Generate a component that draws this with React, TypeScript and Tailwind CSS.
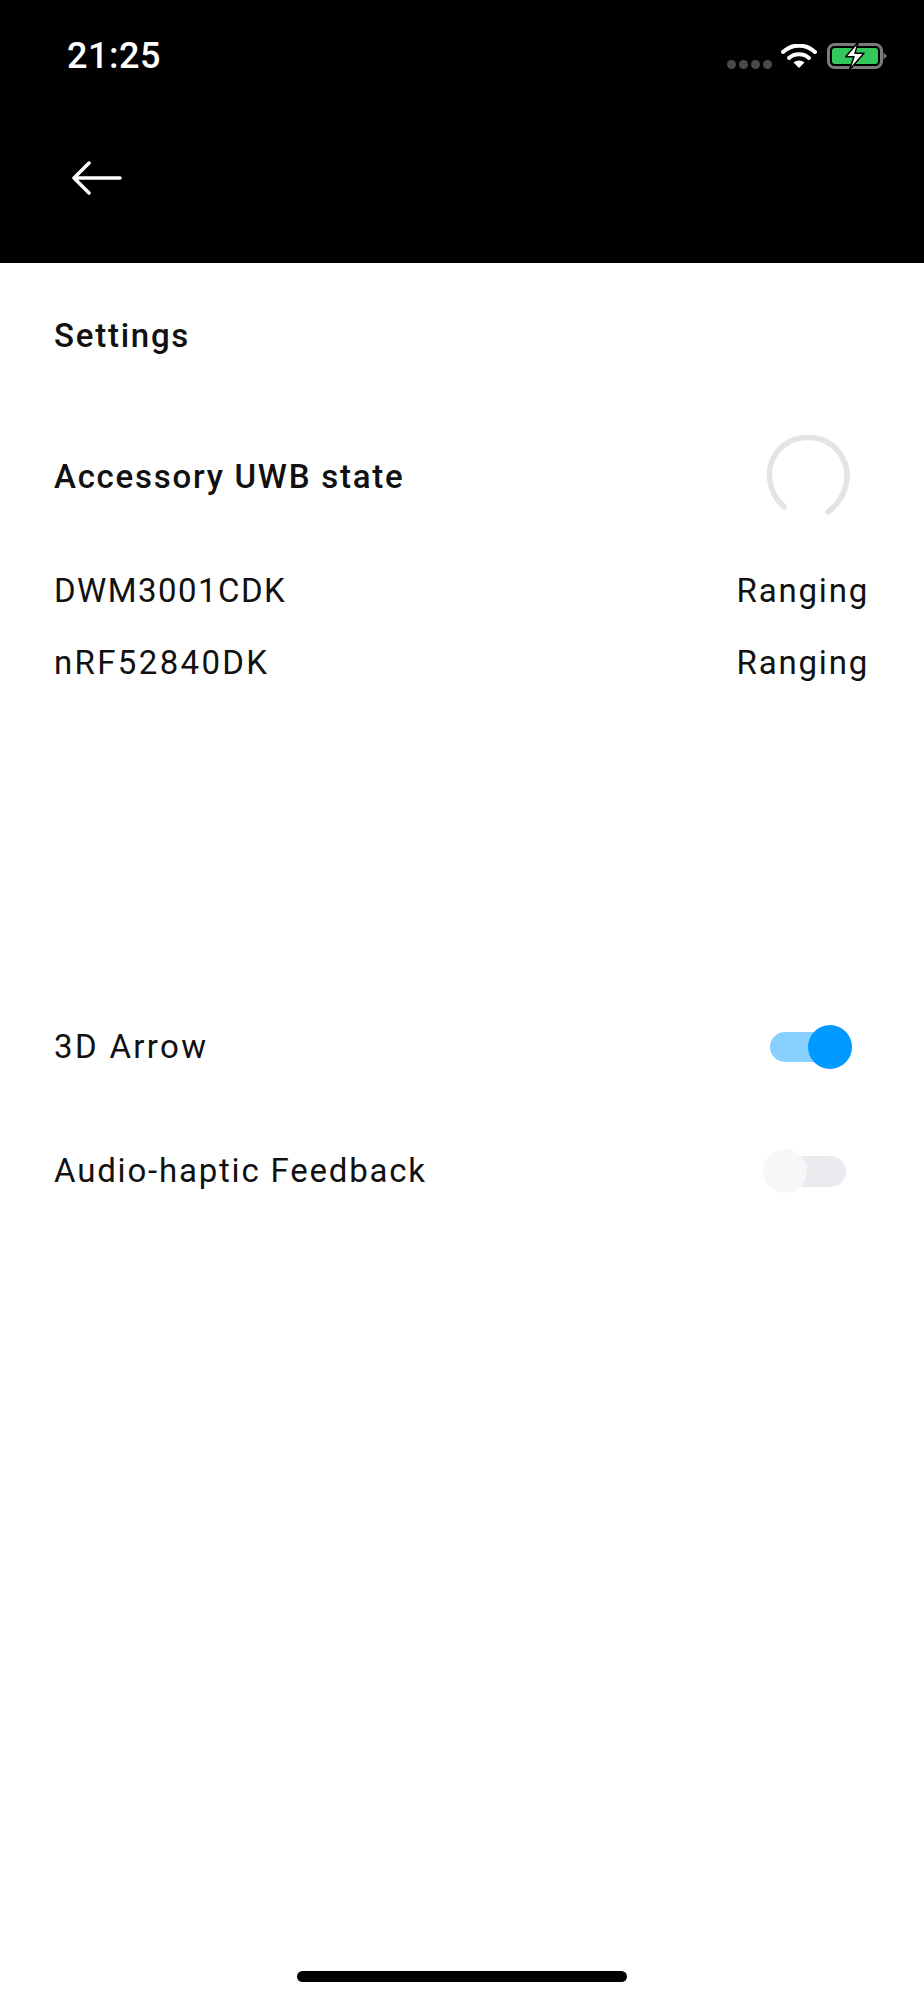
const rowBase = "text-[33px] leading-[40px] text-[#111]";
const rowText = `${rowBase} tracking-[1.8px]`;
const rowWide = `${rowBase} tracking-[2.35px]`;
const boldText = "text-[33px] leading-[40px] font-medium text-[#111] tracking-[1.75px]";

const StatusIcons = () => (
  <div className="flex items-center mt-[7px]">
    <div className="flex gap-[3px] mt-[14px]">
      <div className="w-[9px] h-[9px] rounded-full bg-[#4a4a4a]" />
      <div className="w-[9px] h-[9px] rounded-full bg-[#4a4a4a]" />
      <div className="w-[9px] h-[9px] rounded-full bg-[#4a4a4a]" />
      <div className="w-[9px] h-[9px] rounded-full bg-[#4a4a4a]" />
    </div>
    {/* wifi */}
    <svg width="36" height="26" viewBox="0 1.5 36 26" className="ml-[9px]">
      <path d="M2 9.5C11 1 25 1 34 9.5" fill="none" stroke="#fff" strokeWidth="4" strokeLinecap="round" />
      <path d="M8 15.5C13.5 10.5 22.5 10.5 28 15.5" fill="none" stroke="#fff" strokeWidth="4" strokeLinecap="round" />
      <path d="M12.5 20C15.5 17.2 20.5 17.2 23.5 20L18 25.5Z" fill="#fff" />
    </svg>
    {/* battery */}
    <svg width="60" height="28" viewBox="0 1 60 28" className="ml-[10px] overflow-visible">
      <rect x="1.5" y="2.5" width="53" height="23" rx="6" fill="none" stroke="#7a7a7a" strokeWidth="3" />
      <rect x="5" y="6" width="46" height="16" rx="3" fill="#34c85a" />
      <path d="M56.5 10.5L60 14L56.5 17.5Z" fill="#7a7a7a" />
      <path d="M31.3 0L18.7 14.7H27L22.3 28L37 11.3H28Z" fill="#fff" stroke="#000" strokeWidth="1.5" strokeLinejoin="round" />
    </svg>
  </div>
);

const Toggle = ({ on }: { on: boolean }) =>
  on ? (
    <div className="flex items-center w-[82px] h-[44px]">
      <div className="w-[62px] h-[30px] rounded-l-full bg-[#88d0ff] -mr-[24px]" />
      <div className="w-[44px] h-[44px] rounded-full bg-[#0099ff] relative" />
    </div>
  ) : (
    <div className="flex items-center w-[83px] h-[44px]">
      <div className="w-[44px] h-[44px] rounded-full bg-[#f7f7f8] relative z-10 shrink-0" />
      <div className="w-[62px] h-[31px] rounded-r-full bg-[#e9ebef] -ml-[23px] shrink-0" />
    </div>
  );

const App = () => {
  return (
    <div className="h-[2000px] flex flex-col bg-white font-['Roboto',sans-serif] overflow-hidden">
      <header className="h-[263px] bg-black shrink-0 flex flex-col">
        <div className="flex justify-between items-start pl-[67px] pr-[37px] pt-[36px]">
          <span className="text-[36px] leading-[40px] font-medium text-white tracking-[0.5px]">21:25</span>
          <StatusIcons />
        </div>
        <svg width="50" height="34" viewBox="0 0 50 34" className="ml-[72px] mt-[85px]">
          <path d="M2 17H48M17 2L2 17L17 32" fill="none" stroke="#fff" strokeWidth="3.5" strokeLinecap="round" strokeLinejoin="round" />
        </svg>
      </header>

      <main className="flex-1 flex flex-col pl-[54px] pr-[55px]">
        <h1 className={`mt-[53px] ${boldText}`}>Settings</h1>

        <div className="mt-[78px] flex items-center justify-between h-[86px]">
          <h2 className={boldText}>Accessory UWB state</h2>
          <svg width="86" height="86" viewBox="0 0 86 86" className="mr-[18px]">
            <path d="M19 73C3 58 -1 34 13 17C28 -1 58 -1 73 17C88 35 84 62 63 78" fill="none" stroke="#e3e4e5" strokeWidth="5.5" strokeLinecap="round" />
          </svg>
        </div>

        <div className="mt-[51px] flex justify-between">
          <span className={`${rowBase} tracking-[1.45px]`}>DWM3001CDK</span>
          <span className={rowText}>Ranging</span>
        </div>
        <div className="mt-[32px] flex justify-between">
          <span className={rowWide}>nRF52840DK</span>
          <span className={rowText}>Ranging</span>
        </div>

        <div className="mt-[342px] flex items-center justify-between">
          <span className={rowWide}>3D Arrow</span>
          <div className="mr-[17px]"><Toggle on /></div>
        </div>
        <div className="mt-[80px] flex items-center justify-between">
          <span className={rowText}>Audio-haptic Feedback</span>
          <div className="mr-[23px]"><Toggle on={false} /></div>
        </div>
      </main>

      <div className="flex justify-center pb-[18px]">
        <div className="w-[330px] h-[11px] rounded-full bg-black" />
      </div>
    </div>
  );
};

export default App;
